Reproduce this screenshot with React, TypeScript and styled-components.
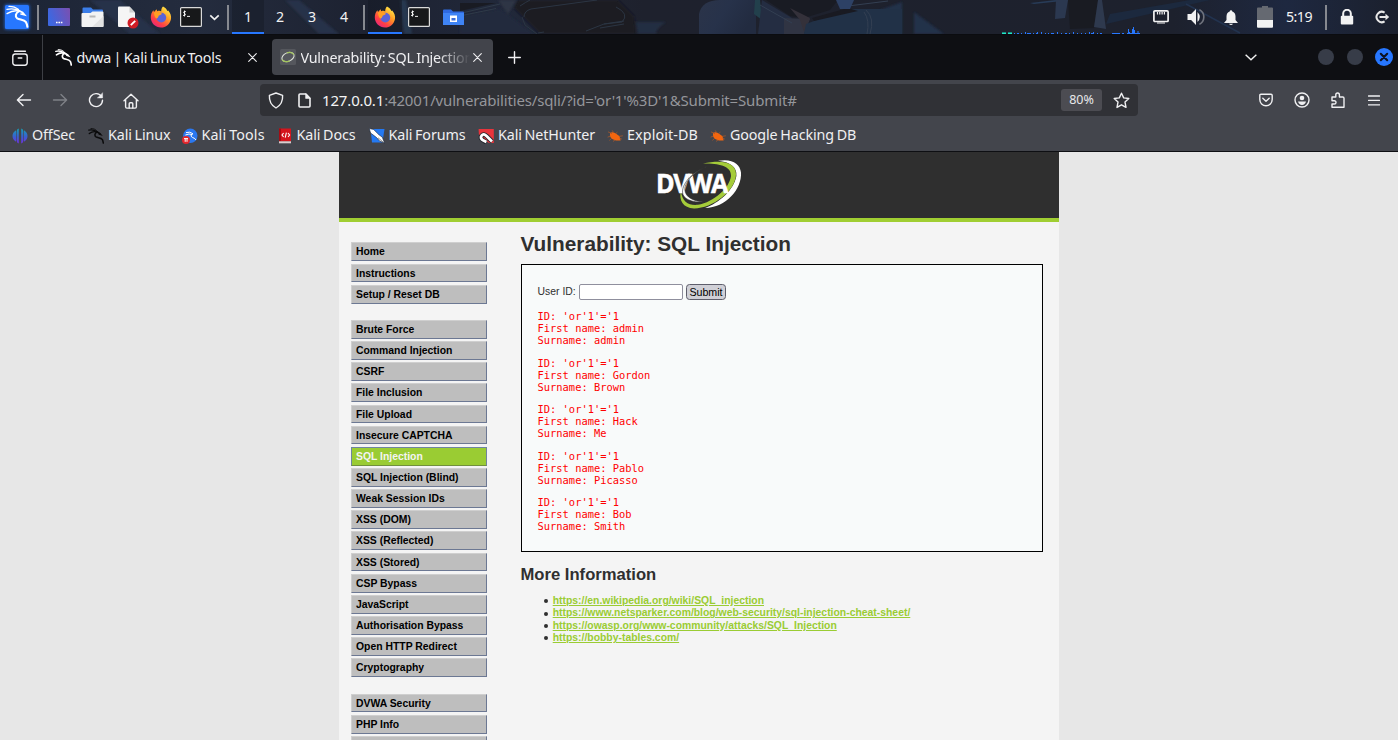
import React from "react";
import styled, { createGlobalStyle, css } from "styled-components";

const GlobalStyle = createGlobalStyle`
  * { box-sizing: border-box; }
  html, body, #root { height: 100%; }
  body { margin: 0; overflow: hidden; font-family: "Noto Sans", sans-serif; background: #e7e7e7; }
  svg { display: block; }
`;

const Screen = styled.div`
  display: flex;
  flex-direction: column;
  width: 1398px;
  height: 740px;
  overflow: hidden;
`;

/* ---------- desktop panel ---------- */

const Panel = styled.header`
  position: relative;
  display: flex;
  align-items: center;
  height: 34px;
  flex: none;
  background: #1e222e;
  color: #f2f2f2;
`;

const Wallpaper = styled.svg`
  position: absolute;
  inset: 0;
`;

const Slot = styled.div<{ $w: number; $gap?: number; $active?: boolean }>`
  position: relative;
  display: flex;
  align-items: center;
  justify-content: center;
  flex: none;
  width: ${(p) => p.$w}px;
  height: 34px;
  margin-left: ${(p) => p.$gap ?? 0}px;
  ${(p) =>
    p.$active &&
    css`
      background: rgba(20, 24, 36, 0.45);
      box-shadow: inset 0 -2px 0 #2777ff;
    `}
`;

const PanelText = styled.span<{ $track?: number }>`
  padding-bottom: 2px;
  font-size: 14.2px;
  letter-spacing: ${(p) => p.$track ?? 0}px;
`;

const Divider = styled.div<{ $gap: number }>`
  position: relative;
  flex: none;
  width: 2px;
  height: 25px;
  margin-left: ${(p) => p.$gap}px;
  background: #868990;
`;

const Spacer = styled.div`
  flex: 1;
`;

/* ---------- browser chrome ---------- */

const TabStrip = styled.div`
  display: flex;
  align-items: center;
  height: 46px;
  flex: none;
  padding-right: 5px;
  background: #0e0f13;
  border-top: 1px solid #0b0c10;
`;

const TabOverview = styled.div`
  display: flex;
  align-items: center;
  width: 43px;
  height: 45px;
  padding-left: 12px;
  border-right: 1px solid #3d3f45;
`;

const Tab = styled.div<{ $w: number; $active?: boolean }>`
  display: flex;
  align-items: center;
  width: ${(p) => p.$w}px;
  height: 36px;
  margin-bottom: 1px;
  padding: 0 ${(p) => (p.$active ? 11 : 9)}px 0 8px;
  border-radius: 4px;
  background: ${(p) => (p.$active ? "#42444b" : "transparent")};
`;

const TabTitle = styled.span<{ $fade?: boolean }>`
  flex: 1;
  min-width: 0;
  margin-left: 4.5px;
  padding-top: 1px;
  font-size: 14.3px;
  letter-spacing: -0.2px;
  word-spacing: -1px;
  line-height: 20px;
  color: #f0f0f2;
  white-space: nowrap;
  overflow: hidden;
  ${(p) =>
    p.$fade &&
    css`
      mask-image: linear-gradient(to right, #000 calc(100% - 32px), transparent);
    `}
`;

const NavBar = styled.div`
  display: flex;
  align-items: center;
  height: 40px;
  flex: none;
  background: #43454c;
`;

const NavIcon = styled.div<{ $w: number }>`
  display: flex;
  align-items: center;
  justify-content: center;
  flex: none;
  width: ${(p) => p.$w}px;
`;

const UrlBar = styled.div`
  display: flex;
  align-items: center;
  width: 878px;
  height: 32px;
  margin-left: 118px;
  padding: 0 8px;
  border-radius: 4px;
  background: #303136;
`;

const UrlText = styled.span`
  flex: 1;
  margin-left: -2px;
  font-size: 15px;
  letter-spacing: -0.155px;
  color: #95969b;
  white-space: nowrap;
  b { font-weight: 400; color: #f4f4f5; }
`;

const ZoomBadge = styled.span`
  width: 41px;
  height: 22px;
  margin-right: 11px;
  border-radius: 3px;
  background: #4c4c52;
  color: #e8e8ea;
  font-size: 12.5px;
  line-height: 22px;
  text-align: center;
`;

const BookmarkBar = styled.div`
  display: flex;
  align-items: center;
  height: 32px;
  flex: none;
  padding-left: 12px;
  background: #43454c;
  border-bottom: 1px solid #0e0f13;
`;

const Bookmark = styled.div<{ $w: number; $gap?: number }>`
  display: flex;
  align-items: center;
  gap: ${(p) => p.$gap ?? 4}px;
  flex: none;
  width: ${(p) => p.$w}px;
  color: #f0f0f2;
  white-space: nowrap;
`;

const BookmarkLabel = styled.span<{ $track?: number }>`
  padding-bottom: 0.5px;
  font-size: 14.3px;
  line-height: 20px;
  letter-spacing: ${(p) => p.$track ?? -0.12}px;
  word-spacing: -0.8px;
`;

/* ---------- web page ---------- */

const Viewport = styled.main`
  display: flex;
  justify-content: center;
  flex: 1;
  min-height: 0;
  overflow: hidden;
  background: #e7e7e7;
  font-family: "Liberation Sans", Arial, sans-serif;
  font-size: 10.4px;
  color: #2f2f2f;
`;

const Container = styled.div`
  display: flex;
  flex-direction: column;
  width: 720px;
  background: #f4f4f4;
`;

const PageHeader = styled.div`
  display: flex;
  justify-content: center;
  height: 70px;
  flex: none;
  padding-top: 6px;
  background: #2f2f2f;
  border-bottom: 4px solid #a0ce32;
`;

const Columns = styled.div`
  display: flex;
`;

const Menu = styled.nav`
  width: 148px;
  padding: 20.4px 0 0 12px;
`;

const MenuGroup = styled.ul`
  margin: 0 0 16.4px;
  padding: 0;
  list-style: none;
`;

const MenuItem = styled.li<{ $on?: boolean }>`
  height: 18.8px;
  margin-bottom: 2.37px;
  padding-left: 4px;
  border: 1px solid;
  border-color: ${(p) => (p.$on ? "#6f85a0 #71849c #71903c #6f85a0" : "#cfcfcf #6c7893 #6c7893 #cfcfcf")};
  background: ${(p) => (p.$on ? "#9acc33" : "#bebebe")};
  color: ${(p) => (p.$on ? "#f4f4f4" : "#000")};
  font-weight: 700;
  line-height: 17px;
  white-space: nowrap;
  &:last-child { margin-bottom: 0; }
`;

const Content = styled.section`
  width: 522px;
  margin-left: 34px;
`;

const Title = styled.h1`
  margin: 10px 0 8px -0.5px;
  font-size: 20.8px;
  line-height: 24px;
`;

const Box = styled.div`
  height: 288px;
  padding: 19px 15.6px;
  border: 1px solid #000;
  background: #f8fafa;
`;

const Form = styled.div`
  display: flex;
  align-items: center;
  height: 16px;
  white-space: nowrap;
`;

const FieldLabel = styled.label`
  width: 41.4px;
  padding-bottom: 1px;
`;

const Field = styled.input`
  width: 104px;
  height: 16px;
  margin: 0 3px 0 0;
  padding: 0;
  border: 1px solid #8f8f9d;
  border-radius: 2px;
  background: #fff;
`;

const Submit = styled.button`
  width: 40px;
  height: 16px;
  padding: 0;
  border: 1px solid #5e5e6b;
  border-radius: 3.5px;
  background: #d0d0d7;
  color: #000;
  font: 10.67px/14px "Liberation Sans", Arial, sans-serif;
`;

const Record = styled.pre`
  margin: 10.4px 0;
  color: #f00;
  font: 10.4px/12px "DejaVu Sans Mono", monospace;
`;

const SubTitle = styled.h2`
  margin: 13px 0 10px -0.5px;
  font-size: 16.64px;
  line-height: 20px;
`;

const Links = styled.ul`
  margin: 0;
  padding-left: 0;
  list-style: none;
  line-height: 12.4px;
`;

const LinkRow = styled.li`
  display: flex;
  align-items: center;
  padding-left: 22.5px;
  &::before {
    content: "";
    width: 4px;
    height: 4px;
    margin-right: 5.2px;
    border-radius: 50%;
    background: #2f2f2f;
  }
`;

const Link = styled.a`
  color: #9acc33;
  font-weight: 700;
  text-decoration: underline;
`;

/* ---------- icons ---------- */

const Dragon = ({ size = 16, color = "#fff" }: { size?: number; color?: string }) => (
  <svg width={size} height={size} viewBox="0 0 24 24" fill="none" stroke={color} strokeLinecap="round">
    <path d="M1 3.2C5 2.4 9 2.6 13 5.2" strokeWidth="1.8" />
    <path d="M2 8.2C6 5.2 10 4.8 14 6.2L17.5 8.6" strokeWidth="2.2" />
    <path d="M4.5 .8C8.5 .8 12 2 14 5.4" strokeWidth="1.3" />
    <path d="M13.6 6C10 7.4 9.4 11.5 12 13.4C15 15 19.5 14 21.6 17.4C22.3 18.8 22.6 20.4 23 22.6" strokeWidth="2.3" />
    <path d="M14.5 6L18 8.2L19.6 10.2L16.6 9.2" strokeWidth="1.8" />
  </svg>
);

const KaliMenu = () => (
  <svg width="32" height="32" viewBox="-4 -4 32 32">
    <defs>
      <filter id="glow" x="-30%" y="-30%" width="160%" height="160%">
        <feGaussianBlur stdDeviation="1.6" />
      </filter>
    </defs>
    <rect x="-.5" y="-.5" width="25" height="25" rx="2" fill="#2777ff" opacity=".75" filter="url(#glow)" />
    <rect width="24" height="24" rx="1.5" fill="#2777ff" />
    <g fill="none" stroke="#fff" strokeLinecap="round">
      <path d="M2 4.4C6 3.4 10 3.6 14 5.6M2 8.6C6 6.2 11 5 15 6.4M4 1.4C8 1.4 11 2.4 13.5 4.6" strokeWidth="1.3" />
      <path d="M14 6.4C10.6 7.8 9.8 11.6 12.2 13.4C15 15 19 14.2 21 17.2C21.8 18.6 22.2 20 22.4 21.8" strokeWidth="2.1" />
      <path d="M13.6 5.6L17.6 7.4L19.6 9.8L16 9" strokeWidth="1.7" />
    </g>
  </svg>
);

const DesktopIcon = () => (
  <svg width="22" height="18" viewBox="0 0 22 18">
    <defs>
      <linearGradient id="desk" x1="0" y1="0.3" x2="1" y2="0">
        <stop offset="0" stopColor="#3e67e0" />
        <stop offset="1" stopColor="#7b4fb0" />
      </linearGradient>
    </defs>
    <rect width="22" height="18" rx="1" fill="url(#desk)" />
    <path d="M8 14.5h1.6M10.4 14.5H12M12.8 14.5h1.6" stroke="#fff" strokeWidth="1.6" />
  </svg>
);

const FilesIcon = () => (
  <svg width="23" height="21" viewBox="0 0 23 21">
    <path d="M1.5 1.5Q1.5 .5 2.5 .5H10l2 2h9q1 0 1 1V10H1.5z" fill="#3b7de8" />
    <path d="M.5 7q0-1 1-1h8l2-1.6h10q1 0 1 1V19q0 1-1 1h-20q-1 0-1-1z" fill="#f3f3f3" />
    <path d="M22.5 9v10q0 1-1 1H11z" fill="#e2e2e2" />
    <path d="M8.5 9.5h6" stroke="#b9b9b9" strokeWidth="2" />
  </svg>
);

const EditorIcon = () => (
  <svg width="21" height="23" viewBox="0 0 21 23">
    <path d="M0 1.5Q0 .5 1 .5h10.5L17 6.5V20q0 1-1 1H1q-1 0-1-1z" fill="#f5f5f5" />
    <path d="M11.5 .5V6.5H17z" fill="#cfcfcf" />
    <circle cx="15" cy="17" r="5.5" fill="#d01c25" />
    <path d="M12.8 19.2l4.4-4.4" stroke="#fff" strokeWidth="1.9" />
  </svg>
);

const FirefoxIcon = ({ id }: { id: string }) => (
  <svg width="22" height="22" viewBox="0 0 22 22">
    <defs>
      <linearGradient id={id} x1=".85" y1=".05" x2=".2" y2=".95">
        <stop offset="0" stopColor="#fff04a" />
        <stop offset=".4" stopColor="#ff9a24" />
        <stop offset=".75" stopColor="#ff3f45" />
        <stop offset="1" stopColor="#e8267c" />
      </linearGradient>
    </defs>
    <path
      d="M13 .4C15.4 1.6 16.8 3.2 17.3 5L18.2 4.6C20.4 7 21.5 10 21 13C20 18 16 21.6 11 21.6C5.4 21.6 1 17.2 .8 11.8C.6 8.8 1.8 6 3.4 4.2L4 6L6.6 3.2L7.2 5.2C9 4.6 10.4 4.8 11.2 5.4C11.2 3.4 11.6 1.6 13 .4z"
      fill={`url(#${id})`}
    />
    <circle cx="11.3" cy="11.6" r="4.9" fill="#5a63d8" />
    <path d="M4 6.6C5.6 5.8 7.6 5.8 9 6.6L12 7.6C11.6 8.8 10 9.2 8.8 9.6C8.4 11 7.6 12.4 6.6 12.6C5 12 4 9 4 6.6z" fill="#ff9f22" />
  </svg>
);

const TerminalIcon = () => (
  <svg width="22" height="20" viewBox="0 0 22 20">
    <rect x=".6" y=".6" width="20.8" height="18.8" rx="1" fill="#17181a" stroke="#d9d9d9" strokeWidth="1.2" />
    <path d="M5.9 4.6H4Q3 5.5 4 6.2L5 6.6Q6 7.5 5 8.4H3M4.5 3.5v6M7 9.4h3" stroke="#fff" fill="none" strokeWidth=".9" />
  </svg>
);

const Chevron = ({ w = 12, s = 1.8 }: { w?: number; s?: number }) => (
  <svg width={w} height={w} viewBox="0 0 12 12" fill="none" stroke="#f2f2f2" strokeWidth={s}>
    <path d="M1.4 3.6l4.6 4.4 4.6-4.4" />
  </svg>
);

const BlueFolder = () => (
  <svg width="21" height="17" viewBox="0 0 21 17">
    <path d="M0 1.5Q0 .5 1 .5H8l2 2h10q1 0 1 1V15q0 1-1 1H1q-1 0-1-1z" fill="#2f6ae0" />
    <rect y="4" width="21" height="12" fill="#3f84f5" />
    <rect x="7" y="6.5" width="7" height="6.5" fill="#fff" />
    <rect x="8.5" y="9" width="4" height="2.5" fill="#3f6fd8" />
  </svg>
);

const NetIcon = () => (
  <svg width="16" height="14" viewBox="0 0 16 14" fill="none" stroke="#f2f2f2">
    <rect x=".9" y=".9" width="14.2" height="10.6" rx="1" strokeWidth="1.7" />
    <path d="M4.5 2v2.5M6.8 2v2.5M9.1 2v2.5M11.4 2v2.5M4 13h8" strokeWidth="1.2" />
  </svg>
);

const VolumeIcon = () => (
  <svg width="18" height="18" viewBox="0 0 18 18" fill="none">
    <path d="M.5 6h3.6L9 1v16L4.1 12H.5z" fill="#f2f2f2" />
    <path d="M10.5 4q4.6 5 0 10z" fill="#f2f2f2" />
    <path d="M12.4 1.6q4.4 2.4 4.4 7.4t-4.4 7.4" stroke="#70747e" strokeWidth="1.6" />
  </svg>
);

const BellIcon = () => (
  <svg width="14" height="15" viewBox="0 0 14 15" fill="#f2f2f2">
    <path d="M7 .2q1.2 0 1.3 1.2Q11.5 2.4 11.5 6.4V10L14 13H0L2.5 10V6.4Q2.5 2.4 5.7 1.4 5.8 .2 7 .2zM5 13.8h4q-.6 1.2-2 1.2t-2-1.2z" />
  </svg>
);

const BatteryIcon = () => (
  <svg width="16" height="22" viewBox="0 0 16 22">
    <path d="M5 0h6v1.6h4q1 0 1 1V14H0V2.6q0-1 1-1h4z" fill="#656971" />
    <path d="M0 14h16v6.8q0 1-1 1H1q-1 0-1-1z" fill="#f2f2f2" />
  </svg>
);

const LockIcon = () => (
  <svg width="14" height="16" viewBox="0 0 14 16">
    <path d="M3.2 8V4.6a3.8 3.8 0 0 1 7.6 0V8" fill="none" stroke="#f2f2f2" strokeWidth="2" />
    <rect x=".8" y="6.8" width="12.4" height="8.6" rx="1" fill="#f2f2f2" />
  </svg>
);

const LogoutIcon = () => (
  <svg width="16" height="14" viewBox="0 0 16 14" fill="none" stroke="#e8e8e8" strokeWidth="2">
    <path d="M10.6 2.6A5.2 5.2 0 1 0 10.6 11.4" />
    <path d="M5.5 7h7" />
    <path d="M11.5 3.8L15.2 7l-3.7 3.2z" fill="#e8e8e8" stroke="none" />
  </svg>
);

const line = { fill: "none", stroke: "#f0f0f2", strokeWidth: 1.4, strokeLinecap: "round", strokeLinejoin: "round" } as const;

const OverviewIcon = () => (
  <svg width="16" height="16" viewBox="0 0 16 16" {...line}>
    <path d="M2.6 1.2h10.8" />
    <rect x=".8" y="4" width="14.4" height="11.2" rx="2.4" />
    <path d="M6.2 8h3.6" />
  </svg>
);
const CloseX = () => (
  <svg width="9" height="9" viewBox="0 0 9 9" {...line} strokeWidth={1.1}>
    <path d="M.7 .7l7.6 7.6M8.3 .7l-7.6 7.6" />
  </svg>
);
const Plus = () => (
  <svg width="13" height="13" viewBox="0 0 13 13" {...line} strokeWidth={1.4}>
    <path d="M6.5 .7v11.6M.7 6.5h11.6" />
  </svg>
);
const Arrow = ({ flip }: { flip?: boolean }) => (
  <svg width="16" height="14" viewBox="0 0 16 14" {...line} stroke={flip ? "#7f8187" : "#f0f0f2"}>
    <path d={flip ? "M1.5 7h13M9 1.6L14.6 7 9 12.4" : "M14.5 7h-13M7 1.6L1.4 7 7 12.4"} />
  </svg>
);
const Reload = () => (
  <svg width="16" height="16" viewBox="0 0 16 16" {...line}>
    <path d="M13.6 4.8A6.5 6.5 0 1 0 14.5 8.2" />
    <path d="M14.6 1v5h-5z" fill="#f0f0f2" strokeWidth=".4" />
  </svg>
);
const Home = () => (
  <svg width="16" height="17" viewBox="0 -1 16 17" {...line}>
    <path d="M1 7.8L8 1.2l7 6.6M2.6 6.6v7.2q0 1.3 1.3 1.3h8.2q1.3 0 1.3-1.3V6.6" />
    <path d="M6.2 15v-4.2q0-1 1-1h1.6q1 0 1 1V15" />
  </svg>
);
const Shield = () => (
  <svg width="16" height="17" viewBox="0 0 16 17" {...line}>
    <path d="M8 1L14.6 3.4Q15.2 12 8 16Q.8 12 1.4 3.4z" />
  </svg>
);
const PageIcon = () => (
  <svg width="13" height="15" viewBox="0 0 13 15" {...line} strokeWidth={1.6}>
    <path d="M1 2q0-1 1-1h6l4 4.2V13q0 1-1 1H2q-1 0-1-1z" />
    <path d="M7.6 1v4.4H12z" fill="#f0f0f2" strokeWidth=".6" />
  </svg>
);
const Star = () => (
  <svg width="17" height="17" viewBox="0 0 17 17" {...line}>
    <path d="M8.5 1.2l2.2 4.7 5.1.6-3.8 3.6 1 5.3-4.5-2.6L4 15.4l1-5.3L1.2 6.5l5.1-.6z" />
  </svg>
);
const Pocket = () => (
  <svg width="14" height="14" viewBox="0 0 14 14" {...line}>
    <path d="M2 1.2h10q1.2 0 1.2 1.2V6.6a6.2 6.2 0 0 1-12.4 0V2.4Q.8 1.2 2 1.2z" />
    <path d="M3.8 5.2L7 8.2l3.2-3" />
  </svg>
);
const Account = () => (
  <svg width="16" height="16" viewBox="0 0 16 16" {...line}>
    <circle cx="8" cy="8" r="7" />
    <circle cx="8" cy="6" r="2.3" fill="#f0f0f2" stroke="none" />
    <path d="M4 9.6h8q-1 3.4-4 3.4T4 9.6z" fill="#f0f0f2" stroke="none" />
  </svg>
);
const Puzzle = () => (
  <svg width="14" height="16" viewBox="0 0 14 16" {...line}>
    <path d="M1 5h3.8V3Q4.8 1 6.6 1T8.4 3V5h3.4q1.2 0 1.2 1.2V15.2H1V12H3.2Q5 12 5 10.4T3.2 8.8H1z" />
  </svg>
);
const Burger = () => (
  <svg width="12" height="11" viewBox="0 0 12 11" {...line} strokeWidth={1.3}>
    <path d="M.5 1h11M.5 5.4h11M.5 9.8h11" />
  </svg>
);

const WindowDot = styled.div`
  width: 16px;
  height: 16px;
  margin: 0 13px 1px 0;
  border-radius: 50%;
  background: #373c48;
  &:last-of-type { margin-right: 12px; }
`;

const WindowClose = () => (
  <svg width="18" height="20" viewBox="0 0 18 20">
    <circle cx="9" cy="9" r="9" fill="#2777ff" />
    <path d="M5.8 5.8l6.4 6.4M12.2 5.8l-6.4 6.4" stroke="#0c1224" strokeWidth="2.1" strokeLinecap="round" />
  </svg>
);

const DvwaFavicon = () => (
  <svg width="16" height="16" viewBox="0 0 16 16">
    <rect width="16" height="16" rx="1.5" fill="#55575d" />
    <g transform="rotate(-24 8 8)" fill="none">
      <ellipse cx="8" cy="8" rx="6.4" ry="4.2" stroke="#dfe3da" strokeWidth="1" />
      <path d="M1.6 8Q2 12 8 12.2M8.5 3.8Q14 4.4 14.3 8.2" stroke="#a3c65c" strokeWidth="1.2" />
    </g>
  </svg>
);

const OffsecIcon = () => (
  <svg width="16" height="16" viewBox="0 0 16 16">
    <defs>
      <linearGradient id="off" x1="0" y1="0" x2="0" y2="1">
        <stop offset="0" stopColor="#14a0b4" />
        <stop offset=".55" stopColor="#3a5fd0" />
        <stop offset="1" stopColor="#7030e0" />
      </linearGradient>
    </defs>
    <path
      d="M6.8 .6V15.4Q4.6 15 4.6 12.5V3.5Q4.6 1 6.8 .6zM9.2 .6V15.4Q11.4 15 11.4 12.5V3.5Q11.4 1 9.2 .6zM4 2.2V13.8Q.5 11.6 .5 8T4 2.2zM12 2.2V13.8Q15.5 11.6 15.5 8T12 2.2z"
      fill="url(#off)"
    />
  </svg>
);

const KaliToolsIcon = () => (
  <svg width="16" height="16" viewBox="0 0 16 16" fill="none">
    <circle cx="8.3" cy="7.8" r="7.2" fill="#2b78f0" />
    <path d="M4 4.6Q8 3.2 11 5.8M3.4 7Q7 5.2 10.4 6.6M10.2 6Q7.4 8.4 10.4 9.4T14 12" stroke="#fff" strokeWidth="1" />
    <circle cx="4" cy="12" r="4" fill="#e4262c" />
    <path d="M2 10.6h4M3.2 10.6v3.2M5 10.6v3.2" stroke="#fff" strokeWidth="1" />
  </svg>
);

const DocsIcon = () => (
  <svg width="14" height="16" viewBox="0 0 14 16" fill="none">
    <path d="M1 .5h12v13H1z" fill="#d4151d" />
    <path d="M1 .5h2v13H1z" fill="#a40c14" />
    <path d="M1 13.3h12v2H1z" fill="#d9cfcf" />
    <path d="M5.6 5L4 7l1.6 2M10 5l1.6 2L10 9M8.4 4.6l-1.2 5" stroke="#fff" strokeWidth="1.1" />
  </svg>
);

const ForumsIcon = () => (
  <svg width="16" height="16" viewBox="1 0 16 16">
    <path d="M2.5 1h14L14.4 14.4H4z" fill="#2479f2" />
    <path d="M1.2 .6l4.4 .8 5.6 5.6 3 2 2.4 6-4.8-1.8-3.2-3.6L2.6 5z" fill="#fff" stroke="#16243a" strokeWidth=".6" />
    <path d="M10 9.8l5.4 4.4" stroke="#666" strokeWidth=".7" />
  </svg>
);

const NetHunterIcon = () => (
  <svg width="16" height="16" viewBox="0 0 16 16" fill="none">
    <path d="M.6 1h15.2v14L11 15 1 8z" fill="#e8343c" />
    <path d="M14.2 13.6L8.8 8.2Q5.6 5 3.6 7.6T5.6 12.6L8.4 14.4" stroke="#23262c" strokeWidth="4.6" />
    <path d="M14 13.4L8.8 8.2Q5.6 5 3.6 7.6T5.6 12.6L8.4 14" stroke="#fff" strokeWidth="2.8" />
  </svg>
);

const BugIcon = () => (
  <svg width="16" height="16" viewBox="0 0 16 16">
    <path d="M3 5Q5 3.6 8 5L12.6 8.2L13.6 12.4L9 12.4Q4.4 11.4 3 8.2z" fill="#f4660f" />
    <path d="M1 3.8l4 2M6.5 4.4L5.2 2.4M9 5.4l1.4-1.2M12 8.4l3.8-.6M12.6 10.4l2.2.6M3.4 8L.6 9.2M5 10l-2.6 2.4M8 12l-2 1.4" stroke="#a8582a" strokeWidth=".8" />
  </svg>
);

const DvwaText = styled.text`
  font-family: "Open Sans", sans-serif;
  font-weight: 700;
  font-size: 26.5px;
  letter-spacing: -1.5px;
  fill: #fff;
  stroke: #fff;
  stroke-width: 0.5px;
`;

const DvwaLogo = () => (
  <svg width="90" height="52" viewBox="0 0 90 52">
    {/* white outer crescent */}
    <path d="M64 2.8C78 .2 86 5.6 87 14.6C88 31 72 50 51 50C65 45 80 32 82.4 18C83.4 9 76 4 64 2.8z" fill="#fff" />
    {/* green crescent */}
    <path d="M49 5.6C68 1.4 81.6 4 82 16C82 33 58 50.6 40 50.4C29 50.2 24.6 42 27 33C28 44 35 47.8 44 46.8C60 44 75.6 30 77 18C77.5 8.6 66 5 49 5.6z" fill="#a5cc3a" />
    <DvwaText x="2" y="35.2" textLength="71" lengthAdjust="spacingAndGlyphs">DVWA</DvwaText>
    {/* inner ring crossing the letters */}
    <path d="M54 8C40 13 28.5 24 28.5 34C28.5 41 38 44.6 49 44C36 42.6 29.6 37 31 29C33.5 20 43 12.2 54 8z" fill="#fff" stroke="#2f2f2f" strokeWidth=".6" />
  </svg>
);

const PanelArt = () => (
  <Wallpaper width="1398" height="34" viewBox="0 0 1398 34" preserveAspectRatio="none" aria-hidden="true">
    <defs>
      <linearGradient id="wall" x1="0" y1="0" x2="1" y2="0">
        <stop offset="0" stopColor="#1c2435" />
        <stop offset=".14" stopColor="#242c3e" />
        <stop offset=".26" stopColor="#1d2231" />
        <stop offset=".36" stopColor="#21283a" />
        <stop offset=".46" stopColor="#1e212d" />
        <stop offset=".84" stopColor="#1d212d" />
        <stop offset=".92" stopColor="#1e2840" />
        <stop offset="1" stopColor="#1b202d" />
      </linearGradient>
      <linearGradient id="round" x1="0" y1="0" x2="1" y2=".4">
        <stop offset="0" stopColor="#2b3449" />
        <stop offset=".5" stopColor="#27324a" />
        <stop offset="1" stopColor="#222b40" />
      </linearGradient>
      <filter id="soft"><feGaussianBlur stdDeviation="1.2" /></filter>
    </defs>
    <rect width="1398" height="34" fill="url(#wall)" />
    <g filter="url(#soft)">
      <path d="M90 0h30l40 34h-30zM285 0h14l40 34h-20z" fill="#283349" />
      <path d="M400 0h6l6 34h-8z" fill="#273850" />
      <path d="M460 16L500 9 534 34H460z" fill="#222b3d" />
      <path d="M498 0h18l-8 14z" fill="#2f3645" />
      <path d="M518 0h100l16 16 2 18H540L514 8z" fill="#1a1b23" />
      <path d="M636 22h30q-10 6-10 12h-18z" fill="#242f43" />
      <path d="M914 12l30 22h-30zM880 10l22-8v32h-22z" fill="#22304a" />
    </g>
    <path d="M460 3h36L460 11z" fill="#191b23" />
    <path d="M462 13l38-9M462 15.5l34-7" stroke="#323f4c" strokeWidth=".8" />
    <path d="M522 17l3 8 12 9M524 17q0-6 7-8l66-9M538 33l6-1M586 31l18-7 20-3M604 24l18-2q8-8-6-15M600 28l24-4M520 6q6-4 10-6" stroke="#2b3543" fill="none" />
    <path d="M699 34V14Q702 0 720 0h36v34z" fill="url(#round)" />
    <path d="M755 0l-1 14 8 6-2-20z" fill="#22404c" />
    <path d="M762 0l30 18-8 16h-26z" fill="#242d42" />
    <path d="M784 18l26 1-6 15h-20z" fill="#303443" />
    <path d="M766 0h72l-8 10-26 8-14-2z" fill="#191b23" />
    <path d="M790 8l20 10-6 14-4-12z" fill="#34313a" />
    <path d="M806 24L846 9h56v25h-98z" fill="#213147" />
    <path d="M812 18l36-10 10 3-44 10z" fill="#191a22" />
    <path d="M866 10q9 8 4 24M864 12q6 8 3 22M760 5l32 18M848 6l40-5" stroke="#333f52" fill="none" />
    <path d="M836 0h18l-4 9h-10z" fill="#2d4165" />
    <path d="M1030 3l26-3h16l-38 4z" fill="#283c58" />
    <path d="M1056 0h12l-3 18-10 1z" fill="#2b3850" />
    <path d="M1068 0h30l-4 28-24 1z" fill="#191b22" />
    <path d="M1098 0h4l4 29-12-2z" fill="#2e394e" />
    <path d="M1110 14l80-14h20l-104 24z" fill="#1c293e" />
    <path d="M1186 4l54 29" stroke="#22334f" strokeWidth="1.5" fill="none" />
    <path d="M1002 32.5h4M1008 32.5h4" stroke="#1b8c80" strokeWidth="1" />
    <path d="M1002 33.5h4M1008 33.5h4" stroke="#20e8c8" strokeWidth="1" />
    <path d="M1014 33.5h1M1017 33.5h2M1021 33.5h1M1025 33.5h1M1027 33.5h4M1033 33.5h1M1036 33.5h2M1041 33.5h1M1045 33.5h1M1048 33.5h1M1051 33.5h3M1057 33.5h1M1061 33.5h1M1065 33.5h2M1069 33.5h1M1073 33.5h1M1077 33.5h1M1081 33.5h1M1085 33.5h1M1089 33.5h1M1091 33.5h3M1097 33.5h1M1100 33.5h2M1112 33.5h8M1122 33.5h2" stroke="#2777ff" />
    <path d="M1025.5 32v1M1037.5 32v1M1041.5 32v1M1057.5 32v1M1073.5 32v1M1089.5 32v1M1093.5 32v1M1128.5 29v5M1129.5 32v2M1132.5 29v5M1133.5 27v7M1134.5 30v4M1138 31v3" stroke="#2777ff" />
    <path d="M1127 33.5h13" stroke="#2777ff" />
  </Wallpaper>
);

/* ---------- data ---------- */

const menuGroups: string[][] = [
  ["Home", "Instructions", "Setup / Reset DB"],
  [
    "Brute Force", "Command Injection", "CSRF", "File Inclusion", "File Upload", "Insecure CAPTCHA",
    "SQL Injection", "SQL Injection (Blind)", "Weak Session IDs", "XSS (DOM)", "XSS (Reflected)",
    "XSS (Stored)", "CSP Bypass", "JavaScript", "Authorisation Bypass", "Open HTTP Redirect", "Cryptography",
  ],
  ["DVWA Security", "PHP Info", ""],
];

const records = [
  ["admin", "admin"],
  ["Gordon", "Brown"],
  ["Hack", "Me"],
  ["Pablo", "Picasso"],
  ["Bob", "Smith"],
];

const links = [
  "https://en.wikipedia.org/wiki/SQL_injection",
  "https://www.netsparker.com/blog/web-security/sql-injection-cheat-sheet/",
  "https://owasp.org/www-community/attacks/SQL_Injection",
  "https://bobby-tables.com/",
];

const bookmarks = [
  { label: "OffSec", w: 76, icon: <OffsecIcon /> },
  { label: "Kali Linux", w: 93.5, icon: <Dragon color="#0b0b0c" /> },
  { label: "Kali Tools", w: 96, track: 0.12, icon: <KaliToolsIcon /> },
  { label: "Kali Docs", w: 91, gap: 5, icon: <DocsIcon /> },
  { label: "Kali Forums", w: 109.5, icon: <ForumsIcon /> },
  { label: "Kali NetHunter", w: 129, icon: <NetHunterIcon /> },
  { label: "Exploit-DB", w: 103, track: 0.12, icon: <BugIcon /> },
  { label: "Google Hacking DB", w: 150, icon: <BugIcon /> },
];

export default function App() {
  return (
    <Screen>
      <GlobalStyle />
      <Panel>
        <PanelArt />
        <Slot $w={32} $gap={1}><KaliMenu /></Slot>
        <Divider $gap={4} />
        <Slot $w={22} $gap={9}><DesktopIcon /></Slot>
        <Slot $w={23} $gap={11}><FilesIcon /></Slot>
        <Slot $w={21} $gap={14}><EditorIcon /></Slot>
        <Slot $w={22} $gap={11}><FirefoxIcon id="ffLauncher" /></Slot>
        <Slot $w={22} $gap={8}><TerminalIcon /></Slot>
        <Slot $w={12} $gap={6}><Chevron w={11} /></Slot>
        <Divider $gap={7} />
        <Slot $w={32} $gap={3} $active><PanelText>1</PanelText></Slot>
        <Slot $w={32}><PanelText>2</PanelText></Slot>
        <Slot $w={32}><PanelText>3</PanelText></Slot>
        <Slot $w={32}><PanelText>4</PanelText></Slot>
        <Divider $gap={3} />
        <Slot $w={34} $gap={3} $active><FirefoxIcon id="ffTask" /></Slot>
        <Slot $w={34}><TerminalIcon /></Slot>
        <Slot $w={34}><BlueFolder /></Slot>
        <Spacer />
        <Slot $w={16}><NetIcon /></Slot>
        <Slot $w={18} $gap={18}><VolumeIcon /></Slot>
        <Slot $w={14} $gap={19}><BellIcon /></Slot>
        <Slot $w={16} $gap={19}><BatteryIcon /></Slot>
        <Slot $w={28} $gap={12}><PanelText $track={-0.5}>5:19</PanelText></Slot>
        <Divider $gap={12} />
        <Slot $w={14} $gap={13}><LockIcon /></Slot>
        <Slot $w={16} $gap={20}><LogoutIcon /></Slot>
        <Slot $w={8} />
      </Panel>

      <TabStrip>
        <TabOverview><OverviewIcon /></TabOverview>
        <Slot $w={4} />
        <Tab $w={219}>
          <Dragon size={17} />
          <TabTitle>dvwa | Kali Linux Tools</TabTitle>
          <CloseX />
        </Tab>
        <Slot $w={6} />
        <Tab $w={221} $active>
          <DvwaFavicon />
          <TabTitle $fade>Vulnerability: SQL Injection</TabTitle>
          <Slot $w={3} />
          <CloseX />
        </Tab>
        <Slot $w={13} $gap={15}><Plus /></Slot>
        <Spacer />
        <Slot $w={14}><Chevron w={15} s={1.2} /></Slot>
        <Slot $w={60} />
        <WindowDot />
        <WindowDot />
        <WindowClose />
      </TabStrip>

      <NavBar>
        <NavIcon $w={48}><Arrow /></NavIcon>
        <NavIcon $w={24}><Arrow flip /></NavIcon>
        <NavIcon $w={48}><Reload /></NavIcon>
        <NavIcon $w={22}><Home /></NavIcon>
        <UrlBar>
          <Shield />
          <NavIcon $w={40}><PageIcon /></NavIcon>
          <UrlText><b>127.0.0.1</b>:42001/vulnerabilities/sqli/?id='or'1'%3D'1&amp;Submit=Submit#</UrlText>
          <ZoomBadge>80%</ZoomBadge>
          <Star />
        </UrlBar>
        <Spacer />
        <NavIcon $w={36}><Pocket /></NavIcon>
        <NavIcon $w={36}><Account /></NavIcon>
        <NavIcon $w={36}><Puzzle /></NavIcon>
        <NavIcon $w={36}><Burger /></NavIcon>
        <NavIcon $w={6} />
      </NavBar>

      <BookmarkBar>
        {bookmarks.map((b) => (
          <Bookmark key={b.label} $w={b.w} $gap={b.gap}>
            {b.icon}
            <BookmarkLabel $track={b.track}>{b.label}</BookmarkLabel>
          </Bookmark>
        ))}
      </BookmarkBar>

      <Viewport>
        <Container>
          <PageHeader><DvwaLogo /></PageHeader>
          <Columns>
            <Menu>
              {menuGroups.map((group, i) => (
                <MenuGroup key={i}>
                  {group.map((item) => (
                    <MenuItem key={item} $on={item === "SQL Injection"}>{item}</MenuItem>
                  ))}
                </MenuGroup>
              ))}
            </Menu>
            <Content>
              <Title>Vulnerability: SQL Injection</Title>
              <Box>
                <Form>
                  <FieldLabel htmlFor="uid">User ID:</FieldLabel>
                  <Field id="uid" />
                  <Submit>Submit</Submit>
                </Form>
                {records.map(([first, last]) => (
                  <Record key={first}>{`ID: 'or'1'='1\nFirst name: ${first}\nSurname: ${last}`}</Record>
                ))}
              </Box>
              <SubTitle>More Information</SubTitle>
              <Links>
                {links.map((l) => (
                  <LinkRow key={l}><Link>{l}</Link></LinkRow>
                ))}
              </Links>
            </Content>
          </Columns>
        </Container>
      </Viewport>
    </Screen>
  );
}
